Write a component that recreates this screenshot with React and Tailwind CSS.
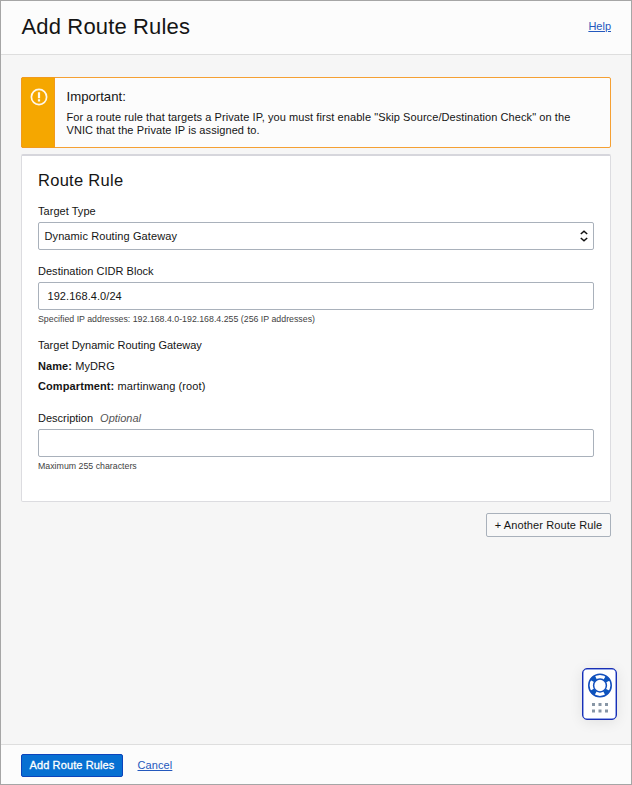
import React from "react";

function Label({ children }) {
  return <div className="h-[14px] whitespace-nowrap leading-[14px]">{children}</div>;
}

function Hint({ children }) {
  return <div className="h-3 whitespace-nowrap text-[8.8px] leading-3 text-[#3f3f3f]">{children}</div>;
}

function Notice() {
  return (
    <section className="flex h-[71px] rounded-[2px] border border-[#f5a033] bg-[#fcfcfc]">
      <div className="-my-px -ml-px w-[34px] shrink-0 rounded-l-[2px] border border-[#f29a1c] bg-[#f5a700] pl-[7.5px] pt-[9.5px]">
        <svg width="18" height="18" viewBox="0 0 18 18" fill="none" stroke="#fff8ea">
          <circle cx="9" cy="9" r="7.6" strokeWidth="1.7" />
          <path d="M9 4.2v6M9 11.3v2.2" strokeWidth="2.2" />
        </svg>
      </div>
      <div className="pl-[11.5px] pt-[10px]">
        <h2 className="h-[18px] text-[13.2px] leading-[18px]">Important:</h2>
        <p className="mt-[5px] whitespace-nowrap leading-[13px] tracking-[0.08px]">
          For a route rule that targets a Private IP, you must first enable "Skip Source/Destination Check" on the
          <br />
          VNIC that the Private IP is assigned to.
        </p>
      </div>
    </section>
  );
}

function RuleCard() {
  return (
    <section className="mt-[6px] h-[348px] rounded-[2px] border border-t-2 border-[#dcdce0] border-t-[#d6d6dc] bg-white px-4 pt-[14px]">
      <h2 className="h-5 text-[16.5px] leading-5 tracking-[0.28px]">Route Rule</h2>
      <div className="mt-[14px] tracking-[0.04px]">
        <Label>Target Type</Label>
      </div>
      <div className="mt-1 flex h-7 items-center justify-between rounded-[2px] border border-[#a9b1bb] pl-[5.5px] pr-[5px]">
        <span className="tracking-[0.1px]">Dynamic Routing Gateway</span>
        <svg width="8" height="12" viewBox="0 0 8 12" fill="none" stroke="#111" strokeWidth="1.5">
          <path d="M.8 4 4 1.2 7.2 4M.8 8 4 10.8 7.2 8" />
        </svg>
      </div>
      <div className="mt-[14px] tracking-[0.03px]">
        <Label>Destination CIDR Block</Label>
      </div>
      <div className="mt-[4px] flex h-7 items-center rounded-[2px] border border-[#a9b1bb] pl-[8.5px] tracking-[0.06px]">192.168.4.0/24</div>
      <div className="mt-[3px]">
        <Hint>Specified IP addresses: 192.168.4.0-192.168.4.255 (256 IP addresses)</Hint>
      </div>
      <div className="mt-[13px] flex flex-col gap-[7px]">
        <Label>Target Dynamic Routing Gateway</Label>
        <div className="tracking-[0.09px]">
          <Label><b>Name:</b> MyDRG</Label>
        </div>
        <div className="-mt-px tracking-[0.1px]">
          <Label><b>Compartment:</b> martinwang (root)</Label>
        </div>
      </div>
      <div className="mt-[18px]">
        <Label>Description <i className="ml-1 text-[#555]">Optional</i></Label>
      </div>
      <div className="mt-1 h-7 rounded-[2px] border border-[#a9b1bb]" />
      <div className="mt-[3px]">
        <Hint>Maximum 255 characters</Hint>
      </div>
    </section>
  );
}

function HelpWidget() {
  return (
    <div className="absolute left-[581px] top-[667px] flex h-[52px] w-[35px] flex-col items-center rounded-[5px] border border-[#1a2fb5] bg-white pt-[4px] shadow-[inset_0_0_0_0.5px_#2a50d0,0_2px_14px_rgba(0,0,0,0.09)]">
      <svg width="26" height="42" viewBox="0 0 26 42" fill="none">
        <circle cx="13" cy="12.5" r="9" stroke="#0b55bd" strokeWidth="5" strokeDasharray="5 9.137" strokeDashoffset="-4.57" />
        <circle cx="13" cy="12.5" r="11.2" stroke="#124fbd" strokeWidth="1.6" />
        <circle cx="13" cy="12.5" r="6.4" stroke="#124fbd" strokeWidth="1.5" />
        <path d="M5 30h3v3H5zM11.5 30h3v3h-3zM18 30h3v3h-3zM5 36.5h3v3H5zM11.5 36.5h3v3h-3zM18 36.5h3v3h-3z" fill="#8796a5" />
      </svg>
    </div>
  );
}

export default function App() {
  return (
    <div className="relative flex h-[785px] w-[632px] flex-col overflow-hidden border border-[#a6a6a6] bg-[#f6f6f6] font-['Liberation_Sans',Arial,sans-serif] text-[11px] text-[#151515]">
      <header className="flex h-[54px] items-center justify-between border-b border-[#dedede] bg-[#fcfcfc] pb-0.5 pl-[20.5px] pr-5">
        <h1 className="text-[22px] leading-7 tracking-[0.15px]">Add Route Rules</h1>
        <a href="#help" className="text-[#2458bd] underline">Help</a>
      </header>
      <main className="flex-1 px-5 pt-[22px]">
        <Notice />
        <RuleCard />
        <div className="mt-[11px] flex justify-end">
          <button className="h-6 w-[125px] whitespace-nowrap rounded-[2px] border border-[#a9b1bb] bg-[#f8f8f8] tracking-[0.1px]">+ Another Route Rule</button>
        </div>
      </main>
      <footer className="flex h-[40px] items-center border-t border-[#dedede] bg-[#fcfcfc] pl-5 pt-[2px]">
        <button className="h-[23px] w-[102px] whitespace-nowrap rounded-[2px] border border-[#0c44bb] bg-[#0770d2] tracking-[0.12px] text-white [-webkit-text-stroke:0.3px_white]">Add Route Rules</button>
        <a href="#cancel" className="ml-[14.5px] tracking-[0.1px] text-[#2458bd] underline">Cancel</a>
      </footer>
      <HelpWidget />
    </div>
  );
}
